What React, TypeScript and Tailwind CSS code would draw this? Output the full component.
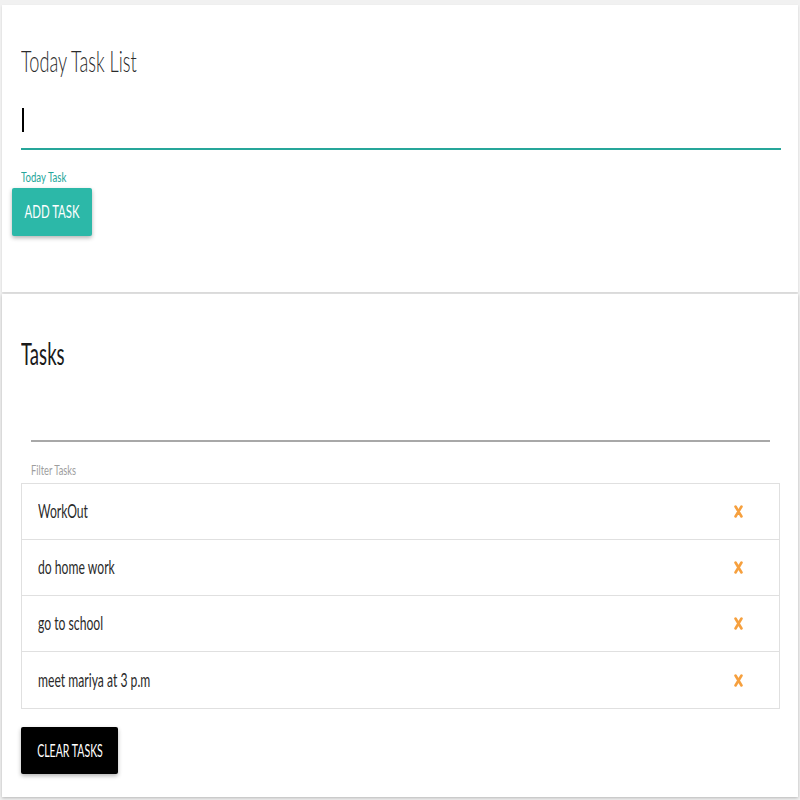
import React from "react";

const tasks = ["WorkOut", "do home work", "go to school", "meet mariya at 3 p.m"];

function CloseMark() {
  return (
    <svg width="9" height="13" viewBox="0 0 9 13" className="block">
      <path d="M1.5 1.5 L7.5 11.5 M7.5 1.5 L1.5 11.5" stroke="#f6a03e" strokeWidth="2.6" strokeLinecap="round" />
    </svg>
  );
}

export default function App() {
  return (
    <div className="min-h-screen bg-[#f1f1f1] pt-[5px] px-[2px] pb-[3px] font-['Lato',sans-serif]">
      {/* add task card */}
      <div className="bg-white h-[287px] pl-[19px] pr-[17px] pt-[37px] shadow-[0_1px_2px_rgba(0,0,0,0.12)]">
        <h4 className="text-[30px] leading-[36px] font-light text-[#2b2b2b] whitespace-nowrap">
          <span className="inline-block origin-left scale-x-[0.605]">Today Task List</span>
        </h4>
        <div className="relative mt-[17px] h-[55px] border-b-2 border-[#26a69a]">
          <span className="absolute left-[1px] top-[13px] h-[24px] w-[2px] bg-black" />
          <input className="w-full h-full outline-none bg-transparent" />
        </div>
        <label className="block mt-[20px] text-[12.5px] leading-[15px] text-[#26a69a] whitespace-nowrap">
          <span className="inline-block origin-left scale-x-[0.77]">Today Task</span>
        </label>
        <button className="mt-[3px] -ml-[9px] w-[80px] h-[48px] rounded-[2px] bg-[#2cb8a8] text-white text-[17px] whitespace-nowrap flex items-center justify-center shadow-[0_2px_4px_rgba(0,0,0,0.3)]">
          <span className="inline-block scale-x-[0.67]">ADD TASK</span>
        </button>
      </div>

      {/* task list card */}
      <div className="mt-[2px] bg-white h-[503px] pl-[19px] pr-[18px] pt-[41px] shadow-[0_1px_3px_rgba(0,0,0,0.25)]">
        <h5 className="text-[31px] leading-[37px] text-[#1a1a1a] whitespace-nowrap">
          <span className="inline-block origin-left scale-x-[0.6]">Tasks</span>
        </h5>
        <div className="mx-[10px]">
          <input className="block w-full h-[70px] outline-none border-b-2 border-[#a8a8a8] bg-transparent" />
          <label className="block mt-[20px] text-[13.5px] leading-[16px] text-[#9e9e9e] whitespace-nowrap">
            <span className="inline-block origin-left scale-x-[0.69]">Filter Tasks</span>
          </label>
        </div>
        <ul className="mt-[5px] border border-[#e0e0e0] divide-y divide-[#e0e0e0]">
          {tasks.map((t) => (
            <li key={t} className="h-[56px] flex items-center justify-between pl-[16px] pr-[36px] text-[19px] text-[#2a2a2a] whitespace-nowrap">
              <span className="inline-block origin-left scale-x-[0.64]">{t}</span>
              <CloseMark />
            </li>
          ))}
        </ul>
        <button className="mt-[18px] w-[97px] h-[47px] rounded-[2px] bg-black text-white text-[17px] whitespace-nowrap flex items-center justify-center shadow-[0_2px_4px_rgba(0,0,0,0.3)]">
          <span className="inline-block scale-x-[0.62]">CLEAR TASKS</span>
        </button>
      </div>
    </div>
  );
}
